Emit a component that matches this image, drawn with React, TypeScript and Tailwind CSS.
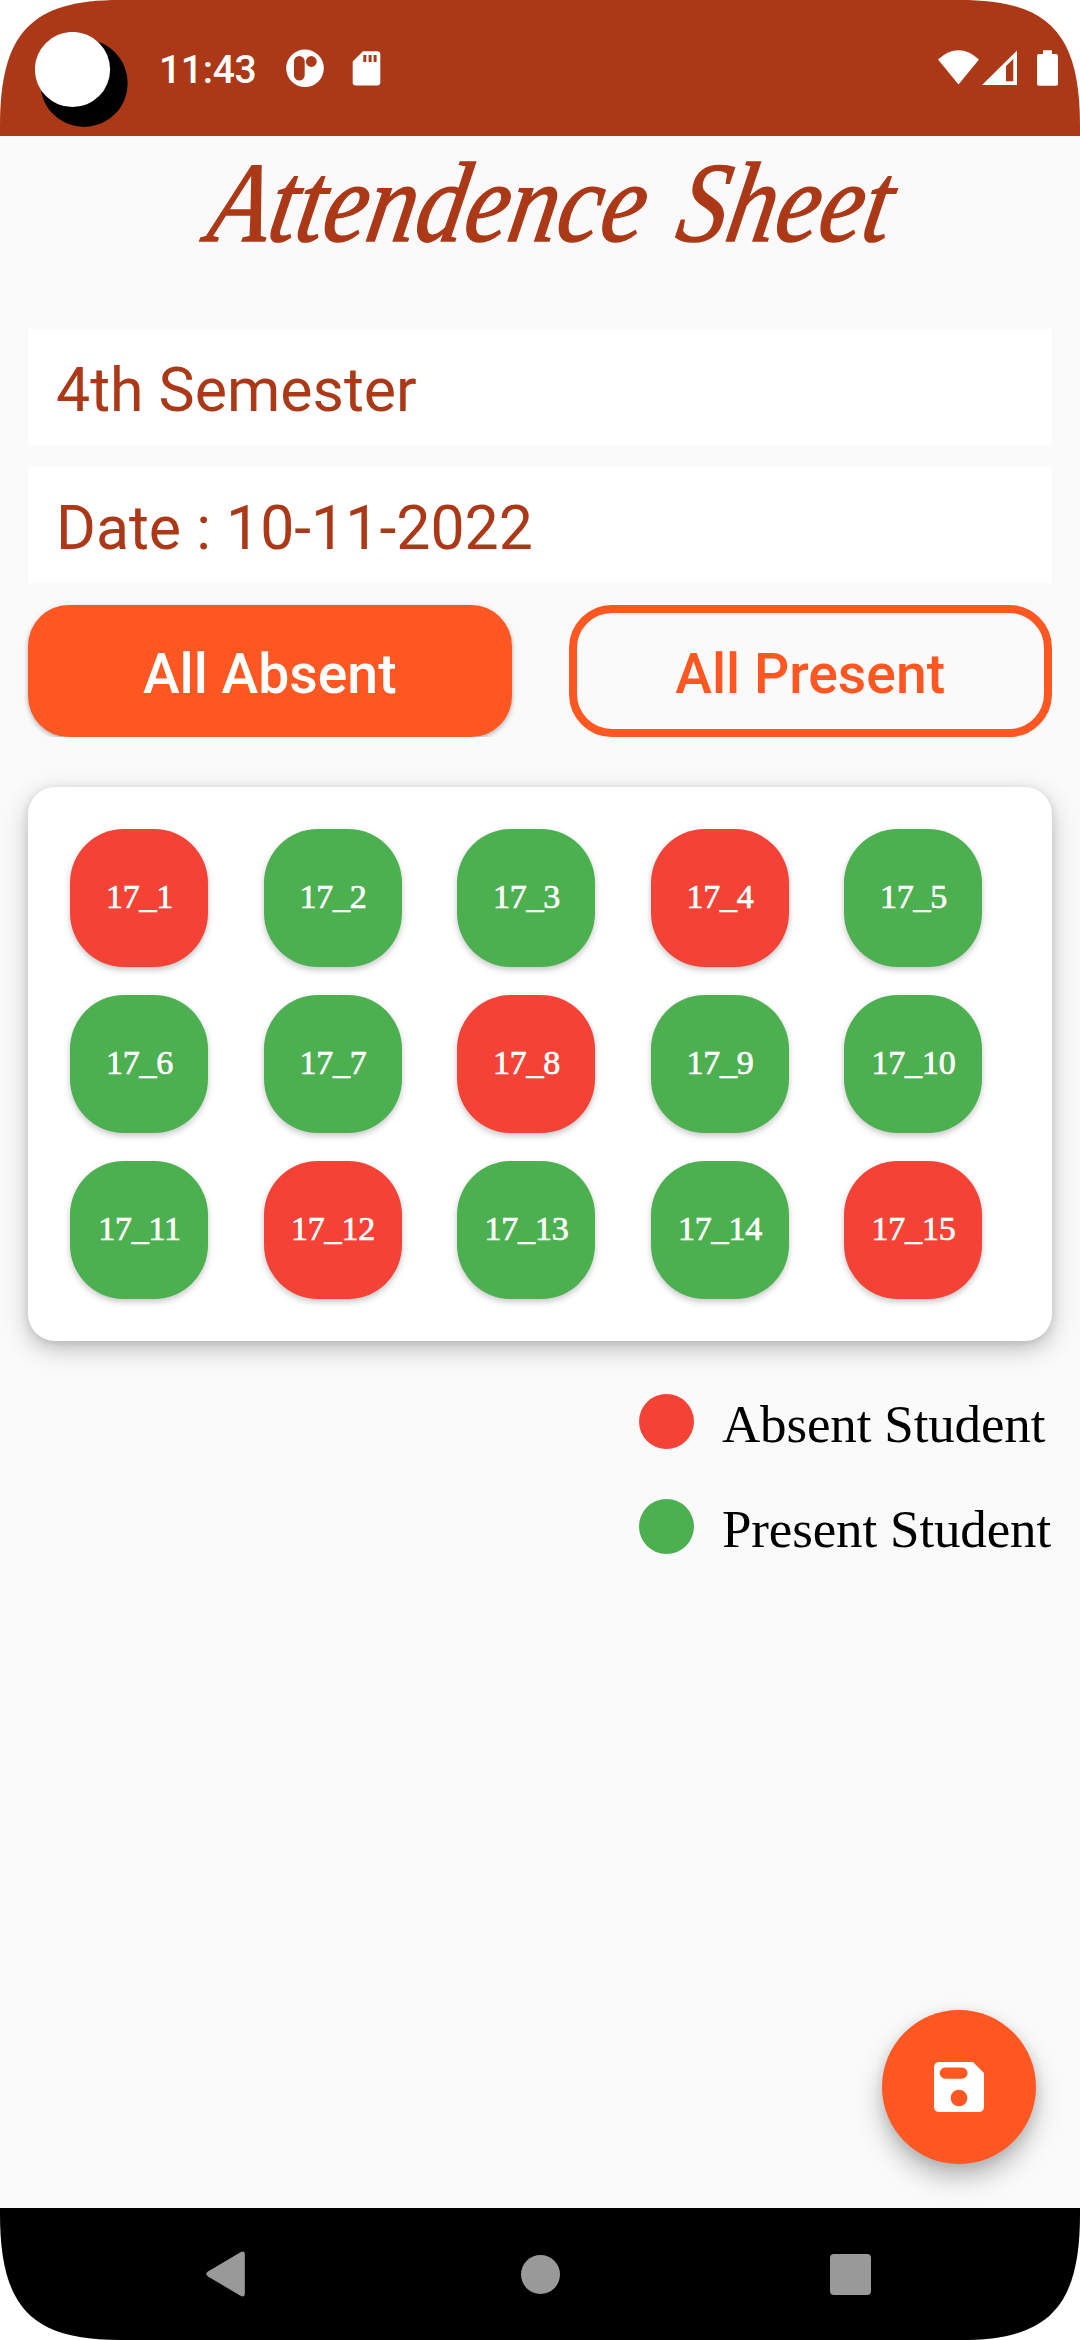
const students = Array.from({ length: 15 }, (_, i) => i + 1);
const absent = [1, 4, 8, 12, 15];

function StatusBar() {
  return (
    <header className="flex h-[136px] shrink-0 items-start bg-[#AB3917] text-white">
      <svg className="ml-[35px] mt-[32px] shrink-0" width="93" height="95" viewBox="35 32 93 95">
        <circle cx="84" cy="83.2" r="43.7" fill="#000" />
        <circle cx="72.5" cy="69.5" r="37.6" fill="#fff" />
      </svg>
      <span className="ml-[31px] mt-[46px] w-[100px] whitespace-nowrap text-[39px] font-medium leading-[48px] tracking-[-0.3px]">11:43</span>
      <svg className="ml-[27px] mt-[49px] shrink-0" width="38" height="39" viewBox="286 49 38 39">
        <circle cx="305" cy="68.3" r="18.8" fill="#fff" />
        <rect x="294" y="56" width="10.7" height="24.6" rx="5.35" fill="#AB3917" />
        <circle cx="311.3" cy="61.5" r="5.4" fill="#AB3917" />
      </svg>
      <svg className="ml-[28px] mt-[51px] shrink-0" width="29" height="35" viewBox="352 51 29 35">
        <path d="M363 51.2H377q3.3 0 3.3 3.3V82.300q0 3.300-3.300 3.300H356q-3.300 0-3.300-3.300V61.500Z" fill="#fff" />
        <path d="M363.300 55h3v7h-3zM368.600 55h3v7h-3zM373.600 55h3v7h-3z" fill="#AB3917" />
      </svg>
      <div className="mr-[22px] mt-[50px] ml-auto flex">
        <svg width="41" height="36" viewBox="938 50 41 36">
          <path d="M938 59.500Q958.500 41.200 979 59.500L958.500 84.500Z" fill="#fff" />
        </svg>
        <svg className="ml-[3px]" width="36" height="36" viewBox="982 50 36 36">
          <path fillRule="evenodd" d="M982 85L1017 50.500V85ZM1006 66V81.300H1013.300V59Z" fill="#fff" />
        </svg>
        <svg className="ml-[19px]" width="21" height="36" viewBox="1037 50 21 36">
          <path d="M1043 50.300H1052V54H1056q2 0 2 2V84q0 1.800-2 1.800H1039q-2 0-2-1.800V56q0-2 2-2H1043Z" fill="#fff" />
        </svg>
      </div>
    </header>
  );
}

function Legend({ color, label }: { color: string; label: string }) {
  return (
    <div className="flex h-[55px] items-center">
      <span className={`size-[55px] shrink-0 rounded-full ${color}`} />
      <span className="ml-[28px] mt-[4px] whitespace-nowrap font-['Liberation_Serif',serif] text-[53px] leading-[60px] tracking-[-0.15px] text-black">
        {label}
      </span>
    </div>
  );
}

export default function App() {
  return (
    <div className="h-[2340px] w-[1080px] overflow-hidden bg-white font-['Roboto',sans-serif]">
      <div className="flex h-full w-full flex-col bg-[#FAFAFA] [clip-path:path('M0_126C0_32_32_0_120_0H960C1048_0_1080_32_1080_126V2214C1080_2308_1048_2340_960_2340H120C32_2340_0_2308_0_2214Z')]">
        <StatusBar />
        <main className="flex grow flex-col px-[28px]">
          <h1 className="flex h-[193px] justify-center whitespace-nowrap pl-[14px] pt-[2px] font-['Liberation_Serif',serif] text-[114px] font-normal italic leading-[130px] text-[#AB3917]">
            <span className="inline-block [transform:scaleX(0.86)_skewX(-12deg)] [word-spacing:10px] [-webkit-text-stroke:1.5px_#AB3917]">Attendence Sheet</span>
          </h1>
          <div className="flex flex-col gap-[22px] text-[60.800px] text-[#AB3917]">
            <div className="flex h-[116px] items-center bg-white px-[28px] pt-[8px]">4th Semester</div>
            <div className="flex h-[116px] items-center bg-white px-[28px] pt-[8px]">Date : 10-11-2022</div>
          </div>
          <div className="mt-[22px] grid h-[132px] grid-cols-2 gap-[57px] text-[55.300px] font-medium">
            <button className="rounded-[41px] bg-[#FF5722] pt-[8px] text-white shadow-[0_2px_5px_rgba(0,0,0,0.3)] [clip-path:inset(-6px_-8px_0_-8px)]">All Absent</button>
            <button className="rounded-[43px] border-8 border-[#FF5722] pt-[8px] text-[#FF5722]">All Present</button>
          </div>
          <section className="mt-[50px] grid h-[554px] grid-cols-[repeat(5,138px)] content-start gap-x-[55.500px] gap-y-[28px] rounded-[27px] bg-white pl-[42px] pt-[42px] shadow-[0_8px_24px_rgba(0,0,0,0.24),0_2px_8px_rgba(0,0,0,0.1)]">
            {students.map((n) => (
              <div
                key={n}
                className={`flex size-[138px] items-center justify-center rounded-[54px] pb-[3px] pl-[1px] font-['Liberation_Serif',serif] text-[34px] tracking-[-0.2px] text-white shadow-[0_3px_6px_rgba(0,0,0,0.22)] [-webkit-text-stroke:0.7px_white] ${absent.includes(n) ? "bg-[#F44336]" : "bg-[#4CAF50]"}`}
              >
                17_{n}
              </div>
            ))}
          </section>
          <div className="mt-[53px] ml-[611px] flex flex-col gap-[50px]">
            <Legend color="bg-[#F44336]" label="Absent Student" />
            <Legend color="bg-[#4CAF50]" label="Present Student" />
          </div>
          <button className="mt-auto mr-[16px] mb-[44px] flex size-[154px] items-center justify-center self-end rounded-full bg-[#FF5722] shadow-[0_14px_26px_rgba(0,0,0,0.26),0_3px_12px_rgba(0,0,0,0.1)]">
            <svg width="50" height="50" viewBox="0 0 50 50">
              <path fillRule="evenodd" d="M5.500 0H39L50 11V44.500Q50 50 44.500 50H5.500Q0 50 0 44.500V5.500Q0 0 5.500 0ZM11.300 5.500a5.600 5.600 0 0 0 0 11.200H28a5.600 5.600 0 0 0 0-11.200ZM25 27.700a8.300 8.300 0 1 0 .01 0Z" fill="#fff" />
            </svg>
          </button>
        </main>
        <nav className="flex h-[132px] shrink-0 items-center bg-black pl-[206px]">
          <svg width="39" height="46" viewBox="0 0 39 46">
            <path d="M2 20.500L34 1.500Q38.800-1 38.800 3V43Q38.800 47 34 44.500L2 25.500Q-1.500 23 2 20.500Z" fill="#999" />
          </svg>
          <span className="ml-[276px] size-[39px] rounded-full bg-[#999]" />
          <span className="ml-[270px] size-[41px] rounded-[4px] bg-[#999]" />
        </nav>
      </div>
    </div>
  );
}
